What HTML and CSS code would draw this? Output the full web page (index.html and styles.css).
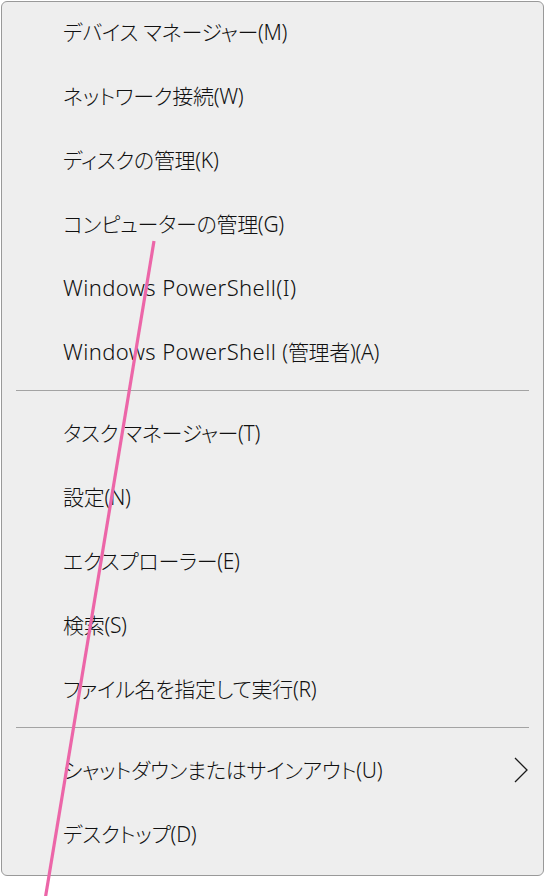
FILE: index.html
```html
<!DOCTYPE html>
<html lang="ja">
<head>
    <meta charset="UTF-8">
    <meta name="viewport" content="width=device-width, initial-scale=1.0">
    <title>クイック リンク メニュー</title>
    <link rel="stylesheet" href="styles.css">
</head>
<body>
    <div class="menu">
        <div class="item">デバイス マネージャー(M)</div>
        <div class="item">ネットワーク接続(W)</div>
        <div class="item">ディスクの管理(K)</div>
        <div class="item">コンピューターの管理(G)</div>
        <div class="item"><span class="en">Windows PowerShell(I)</span></div>
        <div class="item"><span class="en">Windows PowerShell&nbsp;</span>(管理者)(A)</div>
        <div class="separator"></div>
        <div class="item">タスク マネージャー(T)</div>
        <div class="item">設定(N)</div>
        <div class="item">エクスプローラー(E)</div>
        <div class="item">検索(S)</div>
        <div class="item">ファイル名を指定して実行(R)</div>
        <div class="separator"></div>
        <div class="item has-sub">
            <span>シャットダウンまたはサインアウト(U)</span>
            <svg class="chevron" width="14" height="26" viewBox="0 0 14 26">
                <path d="M1 1 L13 13 L1 25" fill="none" stroke="#1a1a1a" stroke-width="1.3"/>
            </svg>
        </div>
        <div class="item">デスクトップ(D)</div>
    </div>

    <!-- 注釈の線 -->
    <svg class="pointer-line" width="545" height="896" viewBox="0 0 545 896">
        <line x1="154" y1="241" x2="45" y2="900" stroke="#ec66a8" stroke-width="3.2"/>
    </svg>
</body>
</html>
```

FILE: styles.css
```css
body {
margin: 0;
background-color: white;
font-family: "Noto Sans", "Noto Sans CJK JP", sans-serif;
font-weight: 300;
color: #111;
overflow: hidden;
}

.menu {
margin: 1px 0 0 1px;
width: 541px;
height: 873px;
border: 1px solid #999;
border-radius: 6px;
background-color: #eeeeee;
box-sizing: content-box;
}

.item {
display: flex;
align-items: center;
height: 64px;
padding-left: 61px;
padding-right: 15px;
padding-bottom: 6px;
box-sizing: border-box;
font-size: 21px;
font-feature-settings: "palt";
letter-spacing: -0.3px;
white-space: pre;
}

/* 英字部分は少し大きめ */
.item .en {
font-size: 22px;
letter-spacing: 0.4px;
}

.has-sub {
justify-content: space-between;
padding-bottom: 0;
}

.has-sub span {
padding-bottom: 6px;
}

.chevron {
display: block;
margin-bottom: 4px;
}

.separator {
height: 1px;
background-color: #a3a3a3;
margin: 4px 14px 12px 14px;
}

.pointer-line {
position: absolute;
top: 0;
left: 0;
pointer-events: none;
}
```
